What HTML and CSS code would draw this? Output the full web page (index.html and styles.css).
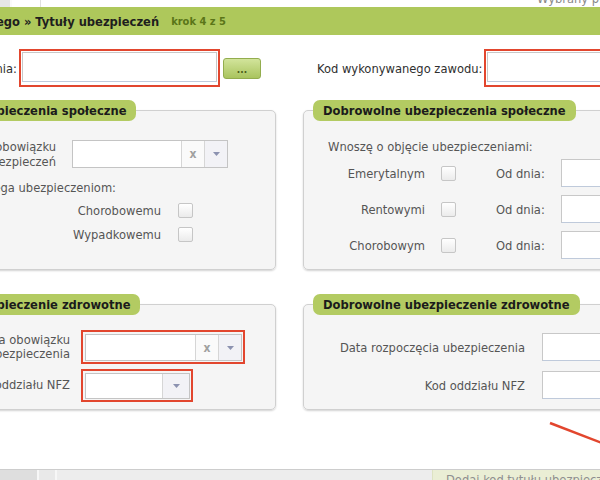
FILE: index.html
```html
<!DOCTYPE html>
<html lang="pl">
<head>
    <meta charset="UTF-8">
    <meta name="viewport" content="width=device-width, initial-scale=1.0">
    <title>Tytuły ubezpieczeń</title>
    <link rel="stylesheet" href="styles.css">
</head>
<body>
    <div class="topbar">
        <div class="tab-edge"></div>
        <div class="tab"></div>
        <div class="topbar-fill"></div>
        <div class="payer">Wybrany płatnik</div>
    </div>

    <div class="dialog">
        <div class="dialog-head">
            <span class="title">Dane ubezpieczonego » Tytuły ubezpieczeń</span>
            <span class="step">krok 4 z 5</span>
        </div>

        <div class="dialog-body">
            <div class="field field-left">
                <label class="field-label">Kod tytułu ubezpieczenia:</label>
                <div class="mark">
                    <input type="text" class="text-input wide">
                </div>
                <button type="button" class="btn-more">...</button>
            </div>
            <div class="field field-right">
                <label class="field-label">Kod wykonywanego zawodu:</label>
                <div class="mark">
                    <input type="text" class="text-input wide">
                </div>
            </div>

            <!-- obowiazkowe spoleczne -->
            <fieldset class="panel">
                <legend>Obowiązkowe ubezpieczenia społeczne</legend>
                <div class="panel-inner social">
                    <div class="form-row">
                        <label class="row-label two-line">Data powstania obowiązku<br>ubezpieczeń</label>
                        <div class="combo combo-social">
                            <input type="text" class="combo-text">
                            <span class="combo-clear">x</span>
                            <span class="combo-arrow"><svg width="7" height="4" viewBox="0 0 7 4"><path d="M0 0h7L3.5 4z" fill="#8c92b0"/></svg></span>
                        </div>
                    </div>
                    <div class="subhead">Podlega ubezpieczeniom:</div>
                    <div class="check-row">
                        <label class="check-label">Chorobowemu</label>
                        <input type="checkbox" class="check">
                    </div>
                    <div class="check-row">
                        <label class="check-label">Wypadkowemu</label>
                        <input type="checkbox" class="check">
                    </div>
                </div>
            </fieldset>

            <!-- dobrowolne spoleczne -->
            <fieldset class="panel">
                <legend>Dobrowolne ubezpieczenia społeczne</legend>
                <div class="panel-inner voluntary">
                    <div class="intro">Wnoszę o objęcie ubezpieczeniami:</div>
                    <div class="vol-row">
                        <label class="vol-label">Emerytalnym</label>
                        <input type="checkbox" class="check">
                        <span class="since">Od dnia:</span>
                        <input type="text" class="text-input date">
                    </div>
                    <div class="vol-row">
                        <label class="vol-label">Rentowymi</label>
                        <input type="checkbox" class="check">
                        <span class="since">Od dnia:</span>
                        <input type="text" class="text-input date">
                    </div>
                    <div class="vol-row">
                        <label class="vol-label">Chorobowym</label>
                        <input type="checkbox" class="check">
                        <span class="since">Od dnia:</span>
                        <input type="text" class="text-input date">
                    </div>
                </div>
            </fieldset>

            <!-- obowiazkowe zdrowotne -->
            <fieldset class="panel lower">
                <legend>Obowiązkowe ubezpieczenie zdrowotne</legend>
                <div class="panel-inner health">
                    <div class="form-row tall">
                        <label class="row-label health-label two-line">Data powstania obowiązku<br>ubezpieczenia</label>
                        <div class="mark small">
                            <div class="combo combo-health">
                                <input type="text" class="combo-text">
                                <span class="combo-clear">x</span>
                                <span class="combo-arrow"><svg width="7" height="4" viewBox="0 0 7 4"><path d="M0 0h7L3.5 4z" fill="#8c92b0"/></svg></span>
                            </div>
                        </div>
                    </div>
                    <div class="form-row tall">
                        <label class="row-label health-label">Kod oddziału NFZ</label>
                        <div class="mark small">
                            <div class="combo combo-nfz">
                                <input type="text" class="combo-text">
                                <span class="combo-arrow"><svg width="7" height="4" viewBox="0 0 7 4"><path d="M0 0h7L3.5 4z" fill="#8c92b0"/></svg></span>
                            </div>
                        </div>
                    </div>
                </div>
            </fieldset>

            <!-- dobrowolne zdrowotne -->
            <fieldset class="panel lower">
                <legend>Dobrowolne ubezpieczenie zdrowotne</legend>
                <div class="panel-inner health">
                    <div class="form-row tall">
                        <label class="row-label vol-health-label">Data rozpoczęcia ubezpieczenia</label>
                        <input type="text" class="text-input date">
                    </div>
                    <div class="form-row tall">
                        <label class="row-label vol-health-label">Kod oddziału NFZ</label>
                        <input type="text" class="text-input date">
                    </div>
                </div>
            </fieldset>
        </div>
    </div>

    <div class="footer">
        <div class="f-side"></div>
        <div class="f-split"></div>
        <div class="f-main"></div>
        <div class="f-note">Dodaj kod tytułu ubezpieczenia</div>
    </div>

    <svg class="pointer" width="60" height="40" viewBox="0 0 60 40">
        <line x1="10" y1="8" x2="62" y2="28" stroke="#e2462e" stroke-width="2.5"/>
    </svg>
</body>
</html>
```

FILE: styles.css
```css
html, body {
    margin: 0;
    height: 100%;
    overflow: hidden; /* the view is a crop of a wider window */
    background: #fff;
}
body {
    position: relative;
    font-family: "DejaVu Sans Condensed", "DejaVu Sans", sans-serif;
    font-size: 12.8px;
    color: #555;
}
input, button {
    font-family: inherit;
    margin: 0;
}

/* strip above the dialog */
.topbar {
    height: 7px;
    display: flex;
    overflow: hidden;
}
.tab-edge {
    width: 10px;
    background: #e6e6e6;
    border-right: 2px solid #fafafa;
}
.tab {
    width: 28px;
    border-right: 1px solid #e0e0e0;
}
.topbar-fill {
    flex: 1;
}
.payer {
    width: 63px;
    white-space: nowrap;
    overflow: hidden;
    color: #8a8a8a;
    line-height: 13px;
    margin-top: -8px;
}

/* dialog */
.dialog {
    height: 462px;
    width: 873px;
    margin-left: -147px; /* left part of the window is off screen */
}
.dialog-head {
    height: 28px;
    background: #aec85b;
    display: flex;
    align-items: center;
    gap: 12px;
    padding-left: 25px;
}
.title {
    font-weight: bold;
    color: #1e1e1e;
}
.step {
    font-weight: bold;
    font-size: 11px;
    color: #5a7518;
}
.dialog-body {
    display: grid;
    grid-template-columns: 423px 423px;
    column-gap: 27px;
    row-gap: 13px;
    padding-top: 14px;
}

/* top fields */
.field {
    display: flex;
    align-items: center;
    gap: 2px;
}
.field-label {
    color: #2f2f2f;
}
.field-left .field-label {
    width: 164px;
    text-align: right;
}
.field-right {
    padding-left: 14px;
}
.mark {
    border: 2px solid #e2462e;
    padding: 1px 1px 3px;
    display: flex;
}
.mark.small {
    padding: 2px 1px 1px 2px;
}
.text-input {
    box-sizing: border-box;
    height: 30px;
    border: 1px solid #c8c8c8;
    border-bottom-color: #bfcadb;
    background: #fff;
    padding: 0 4px;
}
.text-input.wide {
    width: 195px;
}
.text-input.date {
    height: 28px;
    width: 110px;
}
.btn-more {
    width: 38px;
    height: 21px;
    margin-left: 1px;
    border: 1px solid #93ad4e;
    border-radius: 3px;
    background: linear-gradient(#d2e49b, #a9c45e);
    color: #4b5e1a;
    font-weight: bold;
    font-size: 10px;
    padding: 3px 0 0;
}

/* panels */
.panel {
    margin: 0;
    padding: 0;
    min-width: 0;
    border: 1px solid #d0d0d0;
    border-radius: 5px;
    background: #f5f5f5;
    box-shadow: 0 1px 2px rgba(0, 0, 0, 0.18);
}
.panel.lower {
    margin-top: 11px;
}
.panel legend {
    margin-left: 9px;
    padding: 0 10px;
    line-height: 21px;
    background: #b3cb62;
    border-radius: 7px;
    font-weight: bold;
    color: #1b1b1b;
}
.panel-inner.social {
    padding-top: 18px;
}
.panel-inner.voluntary {
    padding: 16px 0 10px 24px;
}
.panel-inner.health {
    padding: 15px 0 7px;
    display: flex;
    flex-direction: column;
    gap: 4px;
}

.form-row {
    display: flex;
    align-items: center;
}
.form-row.tall {
    min-height: 34px;
}
.row-label {
    width: 202px;
    text-align: right;
    flex-shrink: 0;
}
.two-line {
    line-height: 15px;
}
.health-label {
    width: 216px;
    margin-right: 11px;
    line-height: 14px;
}
.vol-health-label {
    width: 221px;
    margin-right: 17px;
}
.subhead {
    width: 262px;
    text-align: right;
    line-height: 20px;
    margin-top: 9px;
}
.check-row {
    display: flex;
    align-items: center;
    height: 24px;
}
.check-label {
    width: 307px;
    text-align: right;
    margin-right: 17px;
}

.intro {
    line-height: 20px;
    margin-bottom: 2px;
}
.vol-row {
    display: flex;
    align-items: center;
    height: 28px;
    margin-bottom: 8px;
}
.vol-row:last-child {
    margin-bottom: 0;
}
.vol-label {
    width: 97px;
    text-align: right;
    margin-right: 16px;
}
.since {
    margin: 0 16px 0 40px;
}

.check {
    appearance: none;
    width: 15px;
    height: 15px;
    border: 1px solid #c6c6c6;
    border-radius: 2px;
    background: linear-gradient(#fff, #ebebeb);
    box-sizing: border-box;
}

/* combo boxes */
.combo {
    display: flex;
    box-sizing: border-box;
    height: 28px;
    border: 1px solid #c4c4c4;
    background: #fff;
}
.combo-social {
    width: 156px;
    margin-left: 16px;
}
.combo-health {
    width: 157px;
    height: 27px;
}
.combo-nfz {
    width: 105px;
    height: 26px;
}
.combo-text {
    flex: 1;
    min-width: 0;
    border: none;
    padding: 0 4px;
    background: transparent;
}
.combo-clear,
.combo-arrow {
    width: 22px;
    border-left: 1px solid #d6d6d6;
    display: flex;
    align-items: center;
    justify-content: center;
}
.combo-clear {
    color: #a0a0a0;
    font-weight: bold;
    font-size: 12px;
    background: #fafafa;
}
.combo-arrow {
    background: #f2f2f6;
}
.combo-nfz .combo-arrow {
    width: 26px;
}

/* page area below the dialog */
.footer {
    height: 30px;
    display: flex;
    border-top: 1px solid #cdcdcd;
    background: linear-gradient(#e6e6e6, #dadada);
}
.f-side {
    width: 37px;
    background: #dedede;
}
.f-split {
    width: 16px;
    border-left: 2px solid #f7f7f7;
    border-right: 2px solid #f7f7f7;
    background: #e9e9e9;
}
.f-main {
    flex: 1;
    background: #ededed;
}
.f-note {
    width: 154px;
    padding: 2px 0 0 13px;
    background: #eaeed5;
    border-left: 1px solid #dde2c2;
    color: #8f8f8f;
    white-space: nowrap;
    overflow: hidden;
}

/* annotation drawn over the screenshot */
.pointer {
    position: absolute;
    left: 540px;
    top: 415px;
}
```
